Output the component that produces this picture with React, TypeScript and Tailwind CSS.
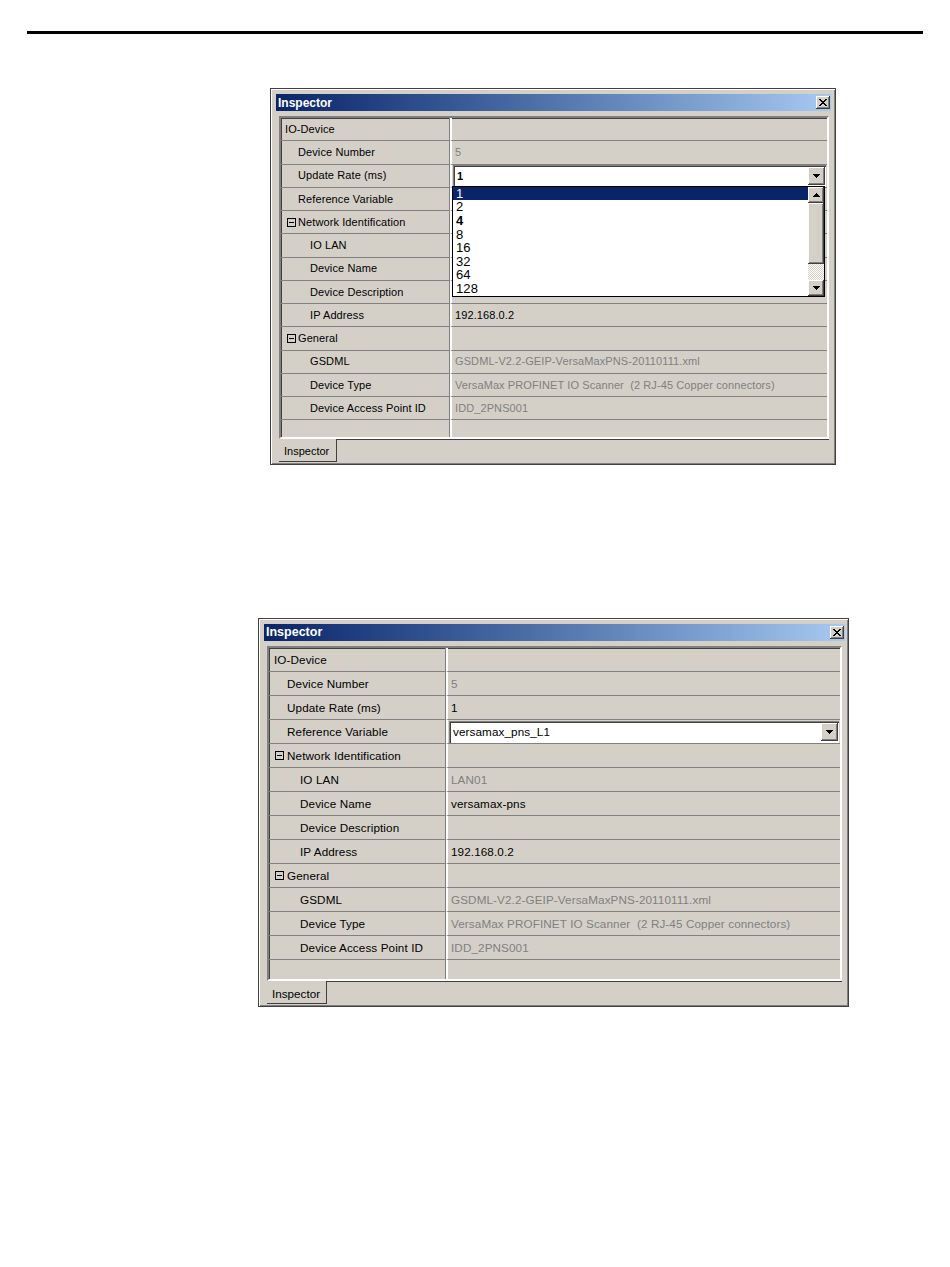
import React from "react";

type Row = {
  label: string;
  value?: string;
  level: 0 | 1 | 2;
  group?: boolean;
  dim?: boolean;
  underList?: boolean;
};

const rows: Row[] = [
  { label: "IO-Device", level: 0 },
  { label: "Device Number", value: "5", level: 1, dim: true },
  { label: "Update Rate (ms)", value: "1", level: 1 },
  { label: "Reference Variable", value: "versamax_pns_L1", level: 1, underList: true },
  { label: "Network Identification", level: 0, group: true },
  { label: "IO LAN", value: "LAN01", level: 2, dim: true, underList: true },
  { label: "Device Name", value: "versamax-pns", level: 2, underList: true },
  { label: "Device Description", value: "", level: 2 },
  { label: "IP Address", value: "192.168.0.2", level: 2 },
  { label: "General", level: 0, group: true },
  { label: "GSDML", value: "GSDML-V2.2-GEIP-VersaMaxPNS-20110111.xml", level: 2, dim: true },
  { label: "Device Type", value: "VersaMax PROFINET IO Scanner\u00a0 (2 RJ-45 Copper connectors)", level: 2, dim: true },
  { label: "Device Access Point ID", value: "IDD_2PNS001", level: 2, dim: true },
];

const rates = ["1", "2", "4", "8", "16", "32", "64", "128"];

const raised =
  "bg-[#d4d0c8] shadow-[inset_-1px_-1px_#404040,inset_1px_1px_#ffffff,inset_-2px_-2px_#808080]";

type Skin = {
  outer: string;
  title: string;
  titleText: string;
  grid: string;
  row: string;
  labelCol: string;
  text: string;
  pad: { top: string; box: string; l1: string; l2: string; gap: string };
  valuePad: string;
  tab: string;
  tabStrip: string;
  combo: string;
};

const small: Skin = {
  outer: "ml-[270px] mt-[54px] w-[566px] h-[377px]",
  title: "ml-[5px] mr-[4px] mt-[5px] h-[17px]",
  titleText: "text-[12px]",
  grid: "ml-[8px] mr-[6px] mt-[5px] h-[323px]",
  row: "h-[23.25px]",
  labelCol: "w-[169px]",
  text: "text-[11px] tracking-[0.1px]",
  pad: { top: "pl-[4px]", box: "pl-[6px]", l1: "pl-[17px]", l2: "pl-[29px]", gap: "mr-[2px]" },
  valuePad: "pl-[3px]",
  tab: "w-[58px] pl-[5px] pt-[3px] text-[11px]",
  tabStrip: "ml-[8px] mr-[6px]",
  combo: "h-[22px]",
};

const large: Skin = {
  outer: "ml-[258px] mt-[153px] w-[591px] h-[389px]",
  title: "ml-[5px] mr-[3px] mt-[5px] h-[17px]",
  titleText: "text-[12.5px]",
  grid: "ml-[8px] mr-[6px] mt-[5px] h-[335px]",
  row: "h-[24px]",
  labelCol: "w-[177px]",
  text: "text-[11.7px] tracking-[0.1px]",
  pad: { top: "pl-[5px]", box: "pl-[6px]", l1: "pl-[18px]", l2: "pl-[31px]", gap: "mr-[3px]" },
  valuePad: "pl-[3px]",
  tab: "w-[60px] pl-[5px] pt-[3px] text-[11.7px]",
  tabStrip: "ml-[8px] mr-[6px]",
  combo: "h-[22px]",
};

function Arrow({ up }: { up?: boolean }) {
  return (
    <svg width="7" height="4" viewBox="0 0 7 4" shapeRendering="crispEdges">
      <path d={up ? "M3 0h1v1h1v1h1v1h1v1H0V3h1V2h1V1h1z" : "M0 0h7v1H6v1H5v1H4v1H3V3H2V2H1V1H0z"} fill="#000" />
    </svg>
  );
}

function ArrowButton({ up, cls }: { up?: boolean; cls: string }) {
  return (
    <div className={`flex items-center justify-center shrink-0 ${raised} ${cls}`}>
      <Arrow up={up} />
    </div>
  );
}

function MinusBox() {
  return (
    <span className="relative inline-block w-[9px] h-[9px] border border-black shrink-0">
      <span className="absolute left-[1px] right-[1px] top-[3px] h-[1px] bg-black" />
    </span>
  );
}

function CloseButton() {
  return (
    <div className={`w-[14px] h-[13px] mr-[1px] flex items-center justify-center ${raised}`}>
      <svg width="8" height="7" viewBox="0 0 8 7" shapeRendering="crispEdges">
        <path
          d="M0 0h2v1h1v1h2V1h1V0h2v1H7v1H6v1H5v1h1v1h1v1h1v1H6V6H5V5H3v1H2v1H0V6h1V5h1V4h1V3H2V2H1V1H0z"
          fill="#000"
        />
      </svg>
    </div>
  );
}

// open list of the update-rate combo
function RateList() {
  return (
    <div className="absolute z-10 left-0 right-[2px] top-[calc(100%-1px)] h-[111px] border border-black bg-white flex font-['Liberation_Sans_Narrow','Liberation_Sans',sans-serif] text-[13px] text-black">
      <div className="flex-1 flex flex-col">
        {rates.map((r, i) => (
          <div
            key={r}
            className={`h-[13.6px] leading-[13.6px] pl-[3px] ${i === 0 ? "bg-[#0a246a] text-white" : ""} ${r === "4" ? "font-bold" : ""}`}
          >
            {r}
          </div>
        ))}
      </div>
      <div className="w-[16px] flex flex-col">
        <ArrowButton up cls="h-[16px]" />
        <div className={`h-[61px] ${raised}`} />
        <div className="flex-1 bg-[repeating-conic-gradient(#ffffff_0_25%,#d4d0c8_0_50%)] bg-size-[2px_2px]" />
        <ArrowButton cls="h-[16px]" />
      </div>
    </div>
  );
}

function Combo({ value, bold, cls }: { value: string; bold?: boolean; cls: string }) {
  return (
    <div className={`flex-1 mx-[1px] flex items-center bg-white border-t border-l border-[#808080] shadow-[inset_1px_1px_#404040] ${cls}`}>
      <span className={`flex-1 pl-[3px] ${bold ? "font-bold" : ""}`}>{value}</span>
      <ArrowButton cls="w-[17px] h-[18px] mr-[1px]" />
    </div>
  );
}

function Inspector({ skin, mode }: { skin: Skin; mode: "list" | "combo" }) {
  return (
    <div
      className={`flex flex-col bg-[#d4d0c8] border border-[#404040] shadow-[inset_1px_1px_#ffffff,inset_-1px_-1px_#808080] ${skin.outer}`}
    >
      <div
        className={`flex items-center justify-between bg-gradient-to-r from-[#0a246a] to-[#a6caf0] ${skin.title}`}
      >
        <span className={`pl-[2px] font-bold text-white ${skin.titleText}`}>Inspector</span>
        <CloseButton />
      </div>

      <div
        className={`flex flex-col border-2 border-t-[#808080] border-l-[#808080] border-b-white border-r-white shadow-[inset_1px_1px_#404040] ${skin.grid} ${skin.text}`}
      >
        {rows.map((r) => {
          const labelPad =
            r.level === 0 ? (r.group ? skin.pad.box : skin.pad.top) : r.level === 1 ? skin.pad.l1 : skin.pad.l2;
          const isRate = r.label.startsWith("Update");
          const isRef = r.label.startsWith("Reference");
          const hidden = mode === "list" && r.underList;
          return (
            <div key={r.label} className={`flex shrink-0 ${skin.row}`}>
              <div
                className={`flex items-center shrink-0 border-r border-b border-[#808080] ${skin.labelCol} ${labelPad}`}
              >
                {r.group && (
                  <span className={`flex ${skin.pad.gap}`}>
                    <MinusBox />
                  </span>
                )}
                <span className="whitespace-nowrap">{r.label}</span>
              </div>
              <div className="relative flex-1 flex items-center border-l-2 border-l-white border-b border-b-[#808080]">
                {mode === "list" && isRate ? (
                  <>
                    <Combo value="1" bold cls={skin.combo} />
                    <RateList />
                  </>
                ) : mode === "combo" && isRef ? (
                  <Combo value={r.value ?? ""} cls={skin.combo} />
                ) : hidden ? null : (
                  <span
                    className={`whitespace-nowrap ${skin.valuePad} ${r.dim ? "text-[#808080]" : "text-black"}`}
                  >
                    {r.value}
                  </span>
                )}
              </div>
            </div>
          );
        })}
        <div className="flex flex-1">
          <div className={`shrink-0 border-r border-[#808080] ${skin.labelCol}`} />
          <div className="flex-1 border-l-2 border-white" />
        </div>
      </div>

      <div className={`flex flex-1 mb-[2px] ${skin.tabStrip}`}>
        <div className={`flex items-center border-r border-b border-[#404040] ${skin.tab}`}>Inspector</div>
        <div className="flex-1 border-t border-[#404040]" />
      </div>
    </div>
  );
}

export default function App() {
  return (
    <div className="w-[950px] h-[1267px] bg-white text-black font-['Liberation_Sans',Arial,sans-serif]">
      <div className="pt-[31px] px-[27px]">
        <div className="h-[3px] bg-black" />
      </div>
      <Inspector skin={small} mode="list" />
      <Inspector skin={large} mode="combo" />
    </div>
  );
}
